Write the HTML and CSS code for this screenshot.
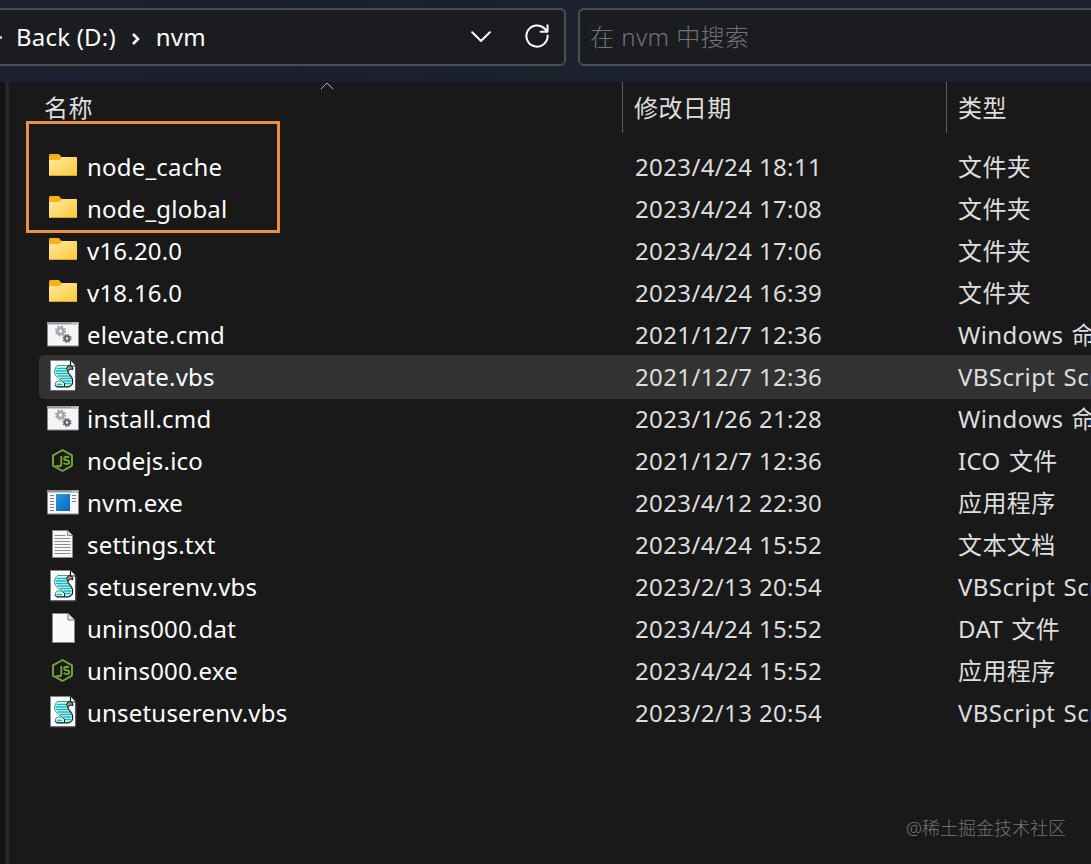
FILE: index.html
```html
<!DOCTYPE html>
<html lang="zh-CN">
  <head>
    <meta charset="utf-8" />
    <title>nvm</title>
    <meta name="viewport" content="width=device-width, initial-scale=1" />
    <link rel="stylesheet" href="styles.css" />
  </head>
  <body>
    <svg class="sprite" aria-hidden="true">
      <defs>
        <linearGradient id="folder-front" x1="0" y1="0" x2="1" y2="1">
          <stop offset="0" stop-color="#ffe9a2" />
          <stop offset="1" stop-color="#fdc937" />
        </linearGradient>
        <linearGradient id="exe-blue" x1="0" y1="0" x2="1" y2="1">
          <stop offset="0" stop-color="#2a9be6" />
          <stop offset="1" stop-color="#0763b8" />
        </linearGradient>
      </defs>
      <symbol id="i-folder" viewBox="0 0 32 34">
        <path fill="#f9b117" d="M2 6.500Q2 5 3.500 5H11q1 0 1.700.7L14.500 8H29q1 0 1 1v5H2z" />
        <path fill="url(#folder-front)" d="M2 11h9.500q1 0 1.700-.8l1.800-2.200H29q1 0 1 1v17q0 1-1 1H3q-1 0-1-1z" />
        <path fill="#e0a32a" d="M2.500 26h27q-.2 1-1 1h-25q-.8 0-1-1z" />
      </symbol>
      <symbol id="i-cmd" viewBox="0 0 32 34">
        <path fill="#f4f5f6" stroke="#85888a" d="M.5 5.500h31v23.500H.5z" />
        <path fill="#9a9da0" d="M0 5h32v2.500H0z" />
        <path stroke="#f0f0f0" stroke-dasharray="1.500 1" d="M24.500 6.200h6.500" />
        <g fill="none">
          <circle cx="13.500" cy="14" r="3" stroke="#a3a7aa" stroke-width="2.600" />
          <circle cx="13.500" cy="14" r="4.700" stroke="#a3a7aa" stroke-width="1.800" stroke-dasharray="1.900 1.790" />
          <circle cx="20" cy="21.500" r="2.300" stroke="#63686c" stroke-width="2.200" />
          <circle cx="20" cy="21.500" r="3.800" stroke="#63686c" stroke-width="1.500" stroke-dasharray="1.500 1.485" />
        </g>
      </symbol>
      <symbol id="i-vbs" viewBox="0 0 32 34">
        <path fill="#fff" stroke="#858585" d="M3.500 1.500h20l5.500 5.500v25H3.500z" />
        <path fill="none" stroke="#111" stroke-width="1.200" d="M23.500 1.500V7H29v25H3.500" />
        <path fill="#d4f7f7" stroke="#2a8f93" stroke-width=".9" d="M10.500 6.500H23q-3.500 1-3 4 .5 2 3 4.500 3.500 4 2.500 8.500-1 3.500-4.500 4H10q-2-1-1.500-3.500.5-2 3-2h4q-4.500-2-7-5.500-2.500-4 0-7.500 1-2 2-2.500z" />
        <path fill="none" stroke="#18b9bd" stroke-width="1.300" d="M9.500 9.500h9.500M8.500 12h11M9 14.500h12M10.500 17h12.500M13 19.500h11M16.500 22h8M17.500 24.500h6.500M10 25.500h5" />
        <path fill="#8b8f94" stroke="#111" d="M19.500 9.500q1-3 3.500-3 3 .5 3 4l-3-.5-2 2.500z" />
        <path fill="none" stroke="#111" d="M20.500 12.500q.5 2 3 4.500 3.500 4 2 8-1.500 3-4.500 3H10q-1.500-.5-2-2M15.500 22.500q3 1 2 4.500" />
      </symbol>
      <symbol id="i-node" viewBox="0 0 32 34">
        <path fill="none" stroke="#75a73a" stroke-width="1.900" stroke-linejoin="round" d="M15.500 7l9.500 5.400v10.200l-9.500 5.400-9.500-5.400V12.400z" />
        <path fill="none" stroke="#75a73a" stroke-width="1.900" d="M14.300 13v8.200q0 2.100-2 2.100-1.800 0-2.800-1M22 14.700q-.8-.9-2.500-.9-2.300 0-2.300 1.700 0 1.500 2.400 1.800 2.600.3 2.600 2 0 1.800-2.600 1.800-2.100 0-2.900-1.300" />
      </symbol>
      <symbol id="i-exe" viewBox="0 0 32 34">
        <path fill="#f5f6f7" stroke="#85888a" d="M.5 5.500h31v23.500H.5z" />
        <path fill="#8d9093" d="M0 5h32v2.500H0z" />
        <path stroke="#f0f0f0" stroke-dasharray="1.500 1" d="M24.500 6.200h6.500" />
        <path fill="url(#exe-blue)" d="M9 9h14v17H9z" />
        <path stroke="#7d8184" d="M3 10.500h4M3 13.500h4M3 16.500h4M3 19.500h4M3 22.500h4M3 25.500h4M25 10.500h4M25 13.500h4M25 16.500h4" />
      </symbol>
      <symbol id="i-txt" viewBox="0 0 32 34">
        <path fill="#f6f6f6" stroke="#8a8a8a" d="M5.500 3.500h15l5 5v22h-20z" />
        <path fill="#ddd" stroke="#8a8a8a" d="M20.500 3.500v5h5" />
        <path stroke="#8d8d8d" d="M7.500 8.500h11M7.500 11.500h16M7.500 14.500h16M7.500 17.500h16M7.500 20.500h16M7.500 23.500h16M7.500 26.500h16" />
      </symbol>
      <symbol id="i-file" viewBox="0 0 32 34">
        <path fill="#fafafa" stroke="#8a8a8a" d="M5.500 2.500h15.500l6.500 6.500v22.500h-22z" />
        <path fill="#e6e6e6" stroke="#777" d="M21 2.500V9h6.500" />
      </symbol>
    </svg>

    <header class="toolbar">
      <nav class="address">
        <span class="crumb-dot"></span>
        <span class="crumb">Back (D:)</span>
        <svg class="crumb-arrow" viewBox="0 0 10 14"><path d="M2 2l5 5-5 5" /></svg>
        <span class="crumb crumb-last">nvm</span>
        <svg class="chevron" viewBox="0 0 20 12"><path d="M1.200 1.200L10 10l8.800-8.800" /></svg>
        <svg class="refresh" viewBox="0 0 24 24">
          <path d="M22.600 11.500A10.600 10.600 0 1 1 19.800 4.800L22 7.400M22.500 1.200v6.600h-6.800" />
        </svg>
      </nav>
      <div class="search">在 <span class="lat">nvm</span> 中搜索</div>
    </header>

    <main class="files">
      <div class="head">
        <div class="col">名称
          <svg class="sort" viewBox="0 0 14 8"><path d="M.8 7.200L7 1l6.200 6.200" /></svg>
        </div>
        <div class="col">修改日期</div>
        <div class="col">类型</div>
      </div>
      <div class="rows">
        <div class="row"><svg class="icon"><use href="#i-folder" /></svg><span class="name">node_cache</span><span class="date">2023/4/24 18:11</span><span class="type">文件夹</span></div>
        <div class="row"><svg class="icon"><use href="#i-folder" /></svg><span class="name">node_global</span><span class="date">2023/4/24 17:08</span><span class="type">文件夹</span></div>
        <div class="row"><svg class="icon"><use href="#i-folder" /></svg><span class="name">v16.20.0</span><span class="date">2023/4/24 17:06</span><span class="type">文件夹</span></div>
        <div class="row"><svg class="icon"><use href="#i-folder" /></svg><span class="name">v18.16.0</span><span class="date">2023/4/24 16:39</span><span class="type">文件夹</span></div>
        <div class="row"><svg class="icon"><use href="#i-cmd" /></svg><span class="name">elevate.cmd</span><span class="date">2021/12/7 12:36</span><span class="type">Windows 命令脚本</span></div>
        <div class="row selected"><svg class="icon"><use href="#i-vbs" /></svg><span class="name">elevate.vbs</span><span class="date">2021/12/7 12:36</span><span class="type">VBScript Script</span></div>
        <div class="row"><svg class="icon"><use href="#i-cmd" /></svg><span class="name">install.cmd</span><span class="date">2023/1/26 21:28</span><span class="type">Windows 命令脚本</span></div>
        <div class="row"><svg class="icon"><use href="#i-node" /></svg><span class="name">nodejs.ico</span><span class="date">2021/12/7 12:36</span><span class="type">ICO 文件</span></div>
        <div class="row"><svg class="icon"><use href="#i-exe" /></svg><span class="name">nvm.exe</span><span class="date">2023/4/12 22:30</span><span class="type">应用程序</span></div>
        <div class="row"><svg class="icon"><use href="#i-txt" /></svg><span class="name">settings.txt</span><span class="date">2023/4/24 15:52</span><span class="type">文本文档</span></div>
        <div class="row"><svg class="icon"><use href="#i-vbs" /></svg><span class="name">setuserenv.vbs</span><span class="date">2023/2/13 20:54</span><span class="type">VBScript Script</span></div>
        <div class="row"><svg class="icon"><use href="#i-file" /></svg><span class="name">unins000.dat</span><span class="date">2023/4/24 15:52</span><span class="type">DAT 文件</span></div>
        <div class="row"><svg class="icon"><use href="#i-node" /></svg><span class="name">unins000.exe</span><span class="date">2023/4/24 15:52</span><span class="type">应用程序</span></div>
        <div class="row"><svg class="icon"><use href="#i-vbs" /></svg><span class="name">unsetuserenv.vbs</span><span class="date">2023/2/13 20:54</span><span class="type">VBScript Script</span></div>
      </div>
      <div class="marker"></div>
      <div class="watermark">@稀土掘金技术社区</div>
    </main>
  </body>
</html>
```

FILE: styles.css
```css
* {
  box-sizing: border-box;
}
body {
  margin: 0;
  height: 864px;
  display: flex;
  flex-direction: column;
  overflow: hidden;
  background-color: #191919;
  color: #fff;
  font-family: "Noto Sans", "Noto Sans CJK SC", sans-serif;
  font-size: 24px;
  line-height: 42px;
  white-space: nowrap;
}
.sprite {
  position: absolute;
  width: 0;
  height: 0;
}

/* toolbar */
.toolbar {
  flex: none;
  height: 82px;
  padding-top: 8px;
  display: flex;
  gap: 12px;
  background: linear-gradient(90deg, #1c2030 0, #1b202e 300px, #1a222e 560px, #1c2030 760px, #1d2030 100%);
}
.address,
.search {
  height: 58px;
  border: 2px solid #4b4e52;
  border-radius: 6px;
  background-color: #1b1c1f;
  display: flex;
  align-items: center;
}
.address {
  width: 566px;
  border-left: 0;
  border-radius: 0 6px 6px 0;
  padding-right: 15px;
}
.crumb-dot {
  width: 2px;
  height: 3px;
  margin-right: 14px;
  background-color: #bbb;
}
.crumb {
  letter-spacing: 0.2px;
}
.crumb-arrow {
  width: 10px;
  height: 14px;
  margin: 3px 15px 0 15px;
}
.crumb-arrow path {
  fill: none;
  stroke: #fff;
  stroke-width: 2.6;
}
.chevron {
  width: 20px;
  height: 12px;
  margin: 0 34px 1px auto;
}
.refresh {
  width: 24px;
  height: 24px;
  margin-bottom: 3px;
}
.chevron path,
.refresh path {
  fill: none;
  stroke: #fff;
  stroke-width: 2;
  stroke-linecap: round;
  stroke-linejoin: round;
}
.search {
  flex: 1;
  margin-right: -10px;
  padding-left: 10px;
  color: #717274;
  font-weight: 300;
  letter-spacing: 0.3px;
}
.search .lat {
  margin: 0 7px;
}

/* file list */
.files {
  flex: 1;
  position: relative;
  padding-left: 39px;
  background: linear-gradient(90deg, #141414 0, #141414 5px, #292929 6px, #292929 8px, #191919 10px);
}
.head {
  display: flex;
  height: 64px;
  color: #dedede;
  letter-spacing: 0.4px;
}
.head .col {
  height: 51px;
  padding: 5px 0 0 11px;
  border-left: 1px solid #5c5c5c;
}
.head .col:nth-child(1) {
  position: relative;
  width: 583px;
  padding-left: 5px;
  border-left: 0;
}
.head .col:nth-child(2) {
  width: 324px;
}
.sort {
  position: absolute;
  left: 281px;
  top: 0;
  width: 14px;
  height: 8px;
}
.sort path {
  fill: none;
  stroke: #b5b5b5;
  stroke-width: 1;
}
.row {
  display: flex;
  height: 42px;
  padding-left: 8px;
}
.row > * {
  flex: none;
}
.row.selected {
  height: 44px;
  margin: -1px 0;
  padding-top: 1px;
  padding-bottom: 1px;
  border-radius: 5px 0 0 5px;
  background-color: #323232;
}
.icon {
  width: 32px;
  height: 34px;
  margin: 3px 8px 0 0;
}
.name {
  width: 548px;
  letter-spacing: 0.2px;
}
.date {
  width: 323px;
  color: #dedede;
  letter-spacing: 0.37px;
}
.type {
  color: #dedede;
  letter-spacing: 0.4px;
  word-spacing: 1.5px;
}

/* highlight frame over the two created folders */
.marker {
  position: absolute;
  left: 26px;
  top: 39px;
  width: 254px;
  height: 112px;
  border: 3px solid #ea8f46;
}
.watermark {
  position: absolute;
  right: 25px;
  bottom: 15px;
  color: #747474;
  font-size: 18px;
  font-weight: 300;
}
```
